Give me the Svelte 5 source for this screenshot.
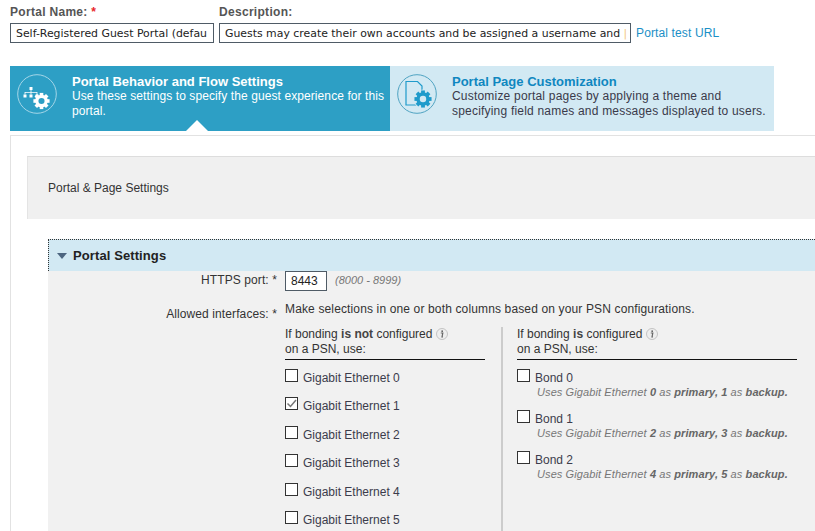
<script>
  const eths = [0, 1, 2, 3, 4, 5];
  const bonds = [
    { n: 0, p: 0, b: 1 },
    { n: 1, p: 2, b: 3 },
    { n: 2, p: 4, b: 5 }
  ];
</script>

{#snippet gear(fill, hole)}
  <g>
    <g fill={fill}>
      <rect x="-2" y="-9" width="4" height="18" />
      <rect x="-2" y="-9" width="4" height="18" transform="rotate(45)" />
      <rect x="-2" y="-9" width="4" height="18" transform="rotate(90)" />
      <rect x="-2" y="-9" width="4" height="18" transform="rotate(135)" />
      <circle r="7" />
    </g>
    <circle r="3.4" fill={hole} />
  </g>
{/snippet}

{#snippet info()}
  <svg class="info" width="12" height="12" viewBox="0 0 12 12">
    <circle cx="6" cy="6" r="5.5" fill="#eee" stroke="#c4c4c4" />
    <rect x="5.4" y="2.4" width="1.6" height="1.6" fill="#666" />
    <path d="M4.8 5h2l-.8 4h1" fill="none" stroke="#666" stroke-width="1.2" />
  </svg>
{/snippet}

<div class="page">
  <div class="top">
    <div class="field name">
      <span class="lbl">Portal Name: <span class="req">*</span></span>
      <div class="inp">Self-Registered Guest Portal (defau</div>
    </div>
    <div class="field desc">
      <span class="lbl">Description:</span>
      <div class="inp">Guests may create their own accounts and be assigned a username and <span class="cut">|</span></div>
    </div>
    <a class="test" href="#top">Portal test URL</a>
  </div>

  <div class="tabs">
    <div class="tab active">
      <svg class="ticon" width="40" height="40" viewBox="0 0 40 40">
        <circle cx="20" cy="20" r="19.3" fill="none" stroke="#a5d6e8" stroke-width="1" />
        <g fill="#fff">
          <rect x="12.500" y="13" width="3" height="3" />
          <rect x="6.500" y="20.500" width="3" height="3" />
          <rect x="12.500" y="20.500" width="3" height="3" />
          <rect x="18.500" y="20.500" width="3" height="3" />
          <path d="M13.600 16h.8v2h6v2.500h-.8v-1.700h-5.200v1.700h-.8v-1.700H8.400v1.700h-.8V18h6z" />
        </g>
        <g transform="translate(24.500 27) scale(.9)">{@render gear("#fff", "#2d9fc5")}</g>
      </svg>
      <div class="ttext">
        <strong>Portal Behavior and Flow Settings</strong>
        <span>Use these settings to specify the guest experience for this portal.</span>
      </div>
      <i class="notch"></i>
    </div>
    <div class="tab light">
      <svg class="ticon" width="40" height="40" viewBox="0 0 40 40">
        <circle cx="20" cy="20" r="19.3" fill="none" stroke="#4fa3c2" stroke-width="1" />
        <path d="M9 7.500h11.500l4.500 4.500v19H9z" fill="none" stroke="#1f9bcb" stroke-width="1.200" />
        <g transform="translate(26 25) scale(.95)">
          <circle r="10" fill="#d2e9f3" />
          {@render gear("#1f9bcb", "#d2e9f3")}
        </g>
      </svg>
      <div class="ttext">
        <strong>Portal Page Customization</strong>
        <span>Customize portal pages by applying a theme and specifying field names and messages displayed to users.</span>
      </div>
    </div>
  </div>

  <div class="panel">
    <div class="pagehead">Portal &amp; Page Settings</div>
    <div class="section">
      <div class="sechead"><i class="caret"></i>Portal Settings</div>
      <div class="secbody">
        <div class="row port">
          <div class="rlabel">HTTPS port: *</div>
          <div class="portval">8443</div>
          <em class="hint">(8000 - 8999)</em>
        </div>
        <div class="row ifaces">
          <div class="rlabel al">Allowed interfaces: *</div>
          <div class="ifbody">
            <div class="make">Make selections in one or both columns based on your PSN configurations.</div>
            <div class="cols">
              <div class="col c1">
                <div class="colhead">If bonding <b>is not</b> configured {@render info()}<br />on a PSN, use:</div>
                <div class="list">
                  {#each eths as e}
                    <div class="eth">
                      <span class="cb">
                        {#if e === 1}
                          <svg width="13" height="13" viewBox="0 0 13 13"><path d="M2.500 6.500l3 3L11 3" fill="none" stroke="#777" stroke-width="1.500" /></svg>
                        {/if}
                      </span>
                      <span class="ethname">Gigabit Ethernet {e}</span>
                    </div>
                  {/each}
                </div>
              </div>
              <div class="col c2">
                <div class="colhead">If bonding <b>is</b> configured {@render info()}<br />on a PSN, use:</div>
                <div class="list">
                  {#each bonds as b}
                    <div class="bond">
                      <div class="bline"><span class="cb"></span><span class="ethname">Bond {b.n}</span></div>
                      <div class="bsub">Uses Gigabit Ethernet <b>{b.p}</b> as <b>primary, {b.b}</b> as <b>backup.</b></div>
                    </div>
                  {/each}
                </div>
              </div>
            </div>
          </div>
        </div>
      </div>
    </div>
  </div>
</div>

<style>
  :global(body) { margin: 0; background: #fff; overflow: hidden; }
  .page {
    width: 815px; height: 531px; overflow: hidden; box-sizing: border-box;
    font-family: "Liberation Sans", Arial, sans-serif; font-size: 12px; color: #333;
    padding: 5px 0 0 10px;
  }
  .top { display: flex; align-items: flex-end; height: 38px; }
  .field { display: flex; flex-direction: column; margin-right: 5px; }
  .lbl { font-weight: bold; color: #555; line-height: 13px; margin-bottom: 4px; letter-spacing: .3px; }
  .req { color: #e8262a; }
  .inp {
    box-sizing: border-box; height: 20px; border: 1px solid #4f5b66; padding: 0 0 0 5px;
    font-family: "DejaVu Sans", sans-serif; font-size: 10.900px; line-height: 20px;
    white-space: nowrap; overflow: hidden; color: #222;
  }
  .name .inp { width: 204px; }
  .desc .inp { width: 412px; }
  .cut { color: #f3c87a; }
  .test { color: #1b8fc6; text-decoration: none; line-height: 14px; margin-bottom: 3px; letter-spacing: .13px; }
  .tabs { display: flex; margin-top: 23px; height: 65px; }
  .tab { position: relative; display: flex; box-sizing: border-box; padding: 8px 0 0 7px; }
  .active { width: 380px; background: #2d9fc5; color: #fff; }
  .light { width: 384px; background: #d2e9f3; color: #3a3a4a; padding-left: 7px; }
  .ticon { flex: none; margin-right: 15px; }
  .ttext { display: flex; flex-direction: column; line-height: 15px; }
  .ttext strong { font-size: 13px; }
  .ttext span { width: 318px; letter-spacing: .09px; }
  .light .ttext strong { color: #0f87c0; }
  .light .ttext span { width: 322px; letter-spacing: .2px; }
  .notch {
    position: absolute; left: 176px; bottom: 0; width: 0; height: 0;
    border-left: 11px solid transparent; border-right: 11px solid transparent; border-bottom: 11px solid #fff;
  }
  .panel {
    margin-top: 4px; width: 900px; height: 500px; box-sizing: border-box;
    border: 1px solid #e2e2e2; padding: 20px 0 0 16px; background: #fff;
  }
  .pagehead {
    box-sizing: border-box; height: 63px; background: #f0f0f0;
    border-top: 1px solid #ddd; border-left: 1px solid #e4e4e4;
    padding-left: 20px; line-height: 62px; color: #333;
  }
  .section { margin: 20px 0 0 21px; }
  .sechead {
    box-sizing: border-box; height: 32px; background: #d2e9f3;
    border-top: 1px dotted #333; border-left: 1px dotted #333;
    font-size: 13px; font-weight: bold; color: #222; line-height: 31px; padding-left: 8px;
    display: flex; align-items: center; letter-spacing: .1px;
  }
  .caret {
    width: 0; height: 0; margin-right: 6px; margin-top: 1px;
    border-left: 5px solid transparent; border-right: 5px solid transparent; border-top: 6px solid #4d6680;
  }
  .secbody { background: #f1f1f1; height: 300px; }
  .row { display: flex; }
  .rlabel { width: 237px; text-align: right; padding-right: 8px; box-sizing: border-box; color: #333; letter-spacing: .1px; }
  .port { height: 20px; align-items: center; }
  .port .rlabel { margin-top: -2px; }
  .portval {
    box-sizing: border-box; width: 42px; height: 20px; border: 1px solid #4f5b66; background: #fff;
    font-size: 12px; line-height: 19px; padding-left: 5px; color: #222;
  }
  .hint { margin: -2px 0 0 8px; font-size: 11px; color: #777; }
  .ifaces { margin-top: 11px; }
  .al { padding-top: 5px; }
  .make { line-height: 14px; letter-spacing: .14px; }
  .cols { display: flex; margin-top: 11px; }
  .col { position: relative; }
  .c1 { width: 200px; }
  .c2 { width: 280px; margin-left: 16px; padding-left: 14px; border-left: 2px solid #ccc; box-sizing: content-box; }
  .colhead { line-height: 15px; height: 32px; border-bottom: 1px solid #111; box-sizing: content-box; }
  .colhead b { color: #444; }
  .info { vertical-align: -2px; }
  .list { padding-top: 9px; }
  .eth { display: flex; align-items: flex-start; height: 28.400px; }
  .cb { flex: none; box-sizing: border-box; width: 13px; height: 13px; border: 1px solid #333; background: #fff; display: block; position: relative; }
  .cb svg { position: absolute; left: -1px; top: -1px; }
  .ethname { margin: 2px 0 0 5px; line-height: 14px; color: #3c3c4c; }
  .bond { height: 41px; }
  .bline { display: flex; align-items: flex-start; }
  .bline .ethname { margin-top: 2px; }
  .bsub { margin: 1px 0 0 20px; font-style: italic; font-size: 11px; letter-spacing: .1px; color: #777; line-height: 13px; white-space: nowrap; }
  .bsub b { color: #666; }
</style>
